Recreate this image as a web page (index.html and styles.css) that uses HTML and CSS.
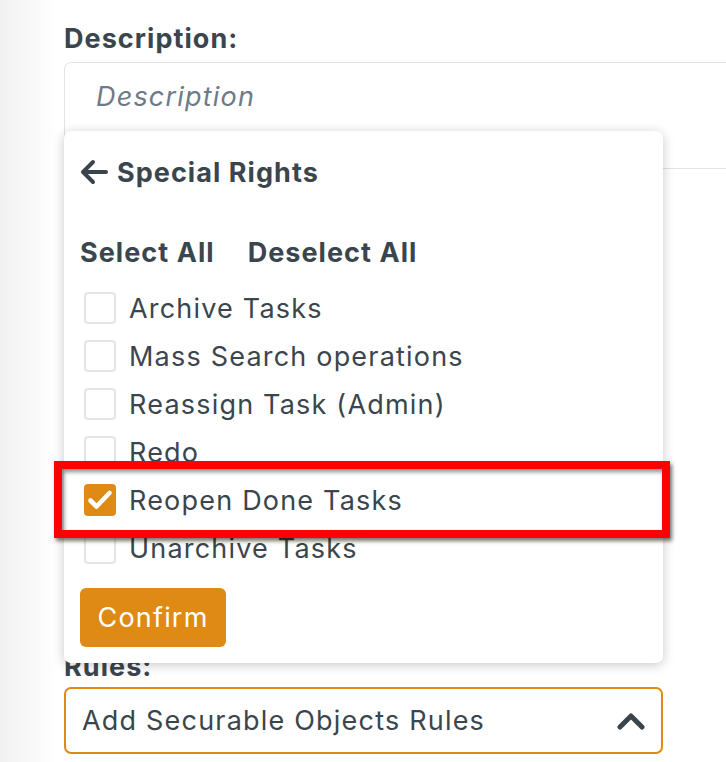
FILE: index.html
```html
<!DOCTYPE html>
<html>
<head>
<meta charset="utf-8">
<link rel="stylesheet" href="styles.css">
</head>
<body>
<div class="page">
  <div class="form">
    <label class="label label-desc">Description:</label>
    <div class="textarea"><span class="placeholder">Description</span></div>
    <div class="spacer"></div>
    <label class="label label-rules">Rules:</label>
    <div class="select">
      <span>Add Securable Objects Rules</span>
      <svg class="chev" width="28" height="18" viewBox="0 0 28 18"><path d="M3 15 L14 4 L25 15" fill="none" stroke="#3a444c" stroke-width="5" stroke-linecap="round" stroke-linejoin="round"/></svg>
    </div>
  </div>

  <div class="popup">
    <div class="popup-head">
      <svg class="back" width="28" height="26" viewBox="0 0 28 26"><path d="M26 13 H4 M13 3 L3 13 L13 23" fill="none" stroke="#3a444c" stroke-width="4" stroke-linecap="round" stroke-linejoin="round"/></svg>
      <span>Special Rights</span>
    </div>
    <div class="select-row">
      <span>Select All</span>
      <span>Deselect All</span>
    </div>
    <ul class="list">
      <li><span class="box"></span>Archive Tasks</li>
      <li><span class="box"></span>Mass Search operations</li>
      <li><span class="box"></span>Reassign Task (Admin)</li>
      <li><span class="box"></span>Redo</li>
      <li><span class="box checked"><svg width="26" height="22" viewBox="0 0 26 22"><path d="M3.5 11.5 L9.5 17.5 L22.5 4" fill="none" stroke="#fff" stroke-width="4.6" stroke-linecap="round" stroke-linejoin="round"/></svg></span>Reopen Done Tasks</li>
      <li><span class="box"></span>Unarchive Tasks</li>
    </ul>
    <button class="confirm">Confirm</button>
  </div>

  <div class="highlight"></div>
</div>
</body>
</html>
```
FILE: styles.css
```css
html, body {
  margin: 0;
  padding: 0;
}
body {
  width: 726px;
  height: 762px;
  overflow: hidden;
  background: linear-gradient(to right, #f1f1f1 0px, #f8f8f8 30px, #ffffff 58px);
  font-family: "Inter", "Liberation Sans", sans-serif;
  color: #3b454d;
  font-size: 27px;
  letter-spacing: 1.2px;
}
.page {
  position: relative;
  width: 726px;
  height: 762px;
  overflow: hidden;
}
.form {
  padding: 22px 0 0 64px;
}
.label {
  display: block;
  font-weight: 700;
  line-height: 34px;
  letter-spacing: 1.05px;
}
.textarea {
  margin-top: 6px;
  width: 700px;
  height: 107px;
  border: 1px solid #e3e3e3;
  border-right: none;
  border-radius: 7px 0 0 7px;
  box-sizing: border-box;
  padding: 14px 0 0 31px;
  background: #fff;
}
.placeholder {
  font-style: italic;
  color: #6e7a86;
  line-height: 40px;
}
.spacer {
  height: 481px;
}
.label-rules {
  line-height: 34px;
}
.select {
  margin-top: 3px;
  width: 599px;
  height: 67px;
  box-sizing: border-box;
  border: 2px solid #df8a14;
  border-radius: 7px;
  background: #fff;
  display: flex;
  align-items: center;
  justify-content: space-between;
  padding: 0 16px 0 16px;
}
.chev {
  display: block;
}
.popup {
  position: absolute;
  left: 64px;
  top: 131px;
  width: 599px;
  height: 532px;
  box-sizing: border-box;
  background: #fff;
  border-radius: 7px;
  box-shadow: 0 2px 12px rgba(0, 0, 0, 0.22);
  padding: 21px 16px 16px 16px;
}
.popup-head {
  display: flex;
  align-items: center;
  height: 40px;
  font-weight: 700;
  letter-spacing: 1.05px;
  gap: 9px;
}
.back {
  display: block;
}
.select-row {
  margin-top: 40px;
  height: 40px;
  display: flex;
  align-items: center;
  gap: 33px;
  font-weight: 700;
  letter-spacing: 1.05px;
}
.list {
  list-style: none;
  margin: 12px 0 0 0;
  padding: 0;
}
.list li {
  height: 48px;
  display: flex;
  align-items: center;
  padding-left: 4px;
}
.box {
  width: 32px;
  height: 32px;
  box-sizing: border-box;
  border: 2px solid #e4e4e4;
  border-radius: 4px;
  margin-right: 13px;
  display: flex;
  align-items: center;
  justify-content: center;
  flex: none;
}
.box.checked {
  background: #df8a14;
  border-color: #df8a14;
}
.confirm {
  margin-top: 16px;
  height: 59px;
  width: 146px;
  border: none;
  border-radius: 6px;
  background: #df8a14;
  color: #fff;
  font-family: inherit;
  font-size: 27px;
  letter-spacing: 1.2px;
  padding: 0;
}
.highlight {
  position: absolute;
  left: 54px;
  top: 461px;
  width: 616px;
  height: 77px;
  box-sizing: border-box;
  border: 8px solid #ff0000;
  box-shadow: 2px 3px 4px rgba(0, 0, 0, 0.55), inset 2px 3px 4px rgba(0, 0, 0, 0.45);
}
```
